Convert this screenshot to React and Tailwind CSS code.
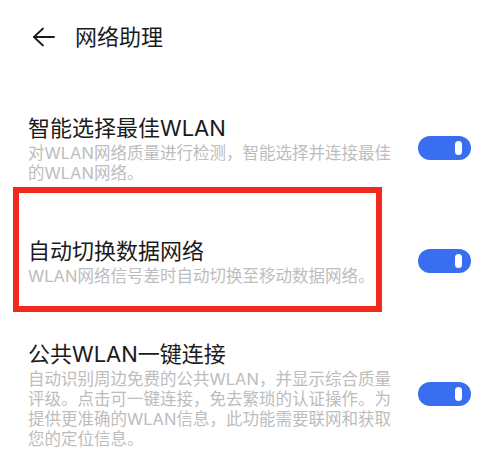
import React from "react";

const Toggle = () => (
  <div className="relative w-[53px] h-[24px] shrink-0 rounded-full bg-[#3a6ef0]">
    <div className="absolute left-[37px] top-[5px] w-[7px] h-[14px] rounded-full bg-white" />
  </div>
);

const Row = ({ title, desc, children }) => (
  <div className="relative flex items-center justify-between pl-[28px] pr-[29px]">
    {children}
    <div className="w-[368px]">
      <div className="text-[22px] leading-[30px] text-[#1b1b1b]">{title}</div>
      <div className="text-[16.5px] leading-[20px] text-[#bdbdbd]">{desc}</div>
    </div>
    <Toggle />
  </div>
);

const App = () => {
  return (
    <div
      className="w-[500px] h-[463px] bg-white overflow-hidden"
      style={{ fontFamily: 'Inter, "Noto Sans CJK SC", sans-serif' }}
    >
      <div className="flex items-center h-[30px] mt-[22px] pl-[32px]">
        <svg width="23" height="20" viewBox="0 0 23 20" fill="none" stroke="#1b1b1b" strokeWidth="1.8" strokeLinecap="round" strokeLinejoin="round">
          <path d="M22 10H2" />
          <path d="M11 1.5L2 10l9 8.5" />
        </svg>
        <span className="ml-[20px] text-[22px] text-[#1b1b1b]">网络助理</span>
      </div>

      <div className="mt-[61px] flex flex-col gap-[53px]">
        <Row
          title="智能选择最佳WLAN"
          desc="对WLAN网络质量进行检测，智能选择并连接最佳的WLAN网络。"
        />
        <Row
          title="自动切换数据网络"
          desc="WLAN网络信号差时自动切换至移动数据网络。"
        >
          {/* red highlight box drawn over the row */}
          <div className="absolute top-[-49px] left-[13px] w-[369px] h-[125px] border-[6px] border-[#f22a1c] pointer-events-none" />
        </Row>
        <Row
          title="公共WLAN一键连接"
          desc="自动识别周边免费的公共WLAN，并显示综合质量评级。点击可一键连接，免去繁琐的认证操作。为提供更准确的WLAN信息，此功能需要联网和获取您的定位信息。"
        />
      </div>
    </div>
  );
};

export default App;
